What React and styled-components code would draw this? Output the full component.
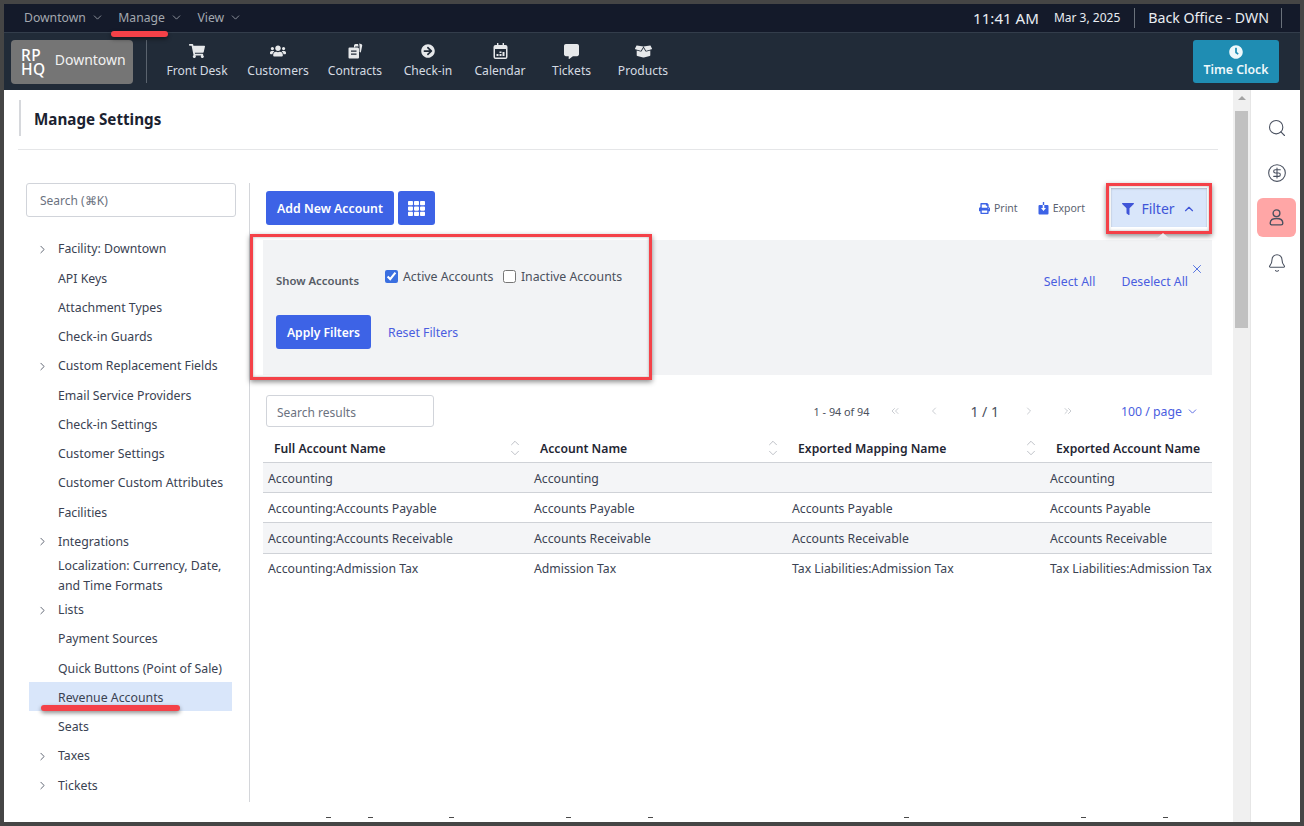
import React from "react";
import styled, { createGlobalStyle } from "styled-components";
import {
  FaShoppingCart,
  FaUsers,
  FaArrowCircleRight,
  FaCommentAlt,
  FaBoxOpen,
  FaClock,
  FaPrint,
  FaFilter,
  FaTh,
} from "react-icons/fa";
import { ChevronDown, ChevronRight, ChevronUp, ChevronLeft, ChevronsLeft, ChevronsRight, X, Search, CircleDollarSign, Bell } from "lucide-react";

const FONT = `"Noto Sans", "Open Sans", sans-serif`;

const GlobalStyle = createGlobalStyle`
  html, body { margin: 0; padding: 0; height: 100%; background: #454545; }
  body { font-family: ${FONT}; overflow: hidden; }
  * { box-sizing: border-box; }
`;

const menuItems = ["Downtown", "Manage", "View"];

const ContractsIcon = () => (
  <svg width="15" height="16" viewBox="0 0 15 16" fill="currentColor">
    <path d="M6 2.5A1.5 1.5 0 0 1 7.5 1H10l.6 2.4H7.2v1.2H6z" />
    <path d="M11.2 0.5 13 .9c.9.2 1.4 1 1.2 1.9L12.8 9.5 11.6 9V3.6z" />
    <path fillRule="evenodd" d="M1.5 4.5h8A1.5 1.5 0 0 1 11 6v8.5a1 1 0 0 1-1 1H1.5a1 1 0 0 1-1-1V5.5a1 1 0 0 1 1-1zM3 7.5v1.2h5.5V7.5zm0 3v1.2h5.5v-1.2z" />
  </svg>
);

const CalendarIcon = () => (
  <svg width="15" height="16" viewBox="0 0 15 16" fill="currentColor">
    <path fillRule="evenodd" d="M4 0h1.4v2h4.2V0H11v2h1.5A2 2 0 0 1 14.500 4v10a2 2 0 0 1-2 2h-10a2 2 0 0 1-2-2V4a2 2 0 0 1 2-2H4zM2 6v8a.6.6 0 0 0 .6.600h9.800A.6.600 0 0 0 13 14V6z" />
    <path d="M3.500 11h2v2h-2zM6.500 11h2v2h-2zM9.500 9h2v4h-2zM6.500 8.500h2v1.500h-2z" />
  </svg>
);

const navItems = [
  { label: "Front Desk", icon: <FaShoppingCart size={16} />, width: 82 },
  { label: "Customers", icon: <FaUsers size={16} />, width: 80 },
  { label: "Contracts", icon: <ContractsIcon />, width: 74 },
  { label: "Check-in", icon: <FaArrowCircleRight size={14} />, width: 72 },
  { label: "Calendar", icon: <CalendarIcon />, width: 72 },
  { label: "Tickets", icon: <FaCommentAlt size={15} />, width: 71 },
  { label: "Products", icon: <FaBoxOpen size={17} />, width: 72 },
];

const sideItems = [
  { label: "Facility: Downtown", more: true },
  { label: "API Keys" },
  { label: "Attachment Types" },
  { label: "Check-in Guards" },
  { label: "Custom Replacement Fields", more: true },
  { label: "Email Service Providers" },
  { label: "Check-in Settings" },
  { label: "Customer Settings" },
  { label: "Customer Custom Attributes" },
  { label: "Facilities" },
  { label: "Integrations", more: true },
  { label: "Localization: Currency, Date, and Time Formats", tall: true },
  { label: "Lists", more: true },
  { label: "Payment Sources" },
  { label: "Quick Buttons (Point of Sale)" },
  { label: "Revenue Accounts", active: true },
  { label: "Seats" },
  { label: "Taxes", more: true },
  { label: "Tickets", more: true },
];

const columns = ["Full Account Name", "Account Name", "Exported Mapping Name", "Exported Account Name"];

const rows = [
  ["Accounting", "Accounting", "", "Accounting"],
  ["Accounting:Accounts Payable", "Accounts Payable", "Accounts Payable", "Accounts Payable"],
  ["Accounting:Accounts Receivable", "Accounts Receivable", "Accounts Receivable", "Accounts Receivable"],
  ["Accounting:Admission Tax", "Admission Tax", "Tax Liabilities:Admission Tax", "Tax Liabilities:Admission Tax"],
];

// clipped descenders of the next screen of text, at the very bottom edge
const clippedGaps = [74, 37, 76, 112, 77, 251, 172, 77];

export default function App() {
  return (
    <Frame>
      <GlobalStyle />
      <TopBar>
        <MenuGroup>
          {menuItems.map((item) => (
            <MenuItem key={item}>
              {item}
              <ChevronDown size={13} strokeWidth={1.5} />
            </MenuItem>
          ))}
        </MenuGroup>
        <StatusGroup>
          <Time>11:41 AM</Time>
          <DateText>Mar 3, 2025</DateText>
          <StatusDivider />
          <Station>Back Office - DWN</Station>
          <StatusDivider />
        </StatusGroup>
      </TopBar>

      <NavBar>
        <LogoButton>
          <LogoMark>
            <span>RP</span>
            <span>HQ</span>
          </LogoMark>
          <LogoName>Downtown</LogoName>
        </LogoButton>
        <NavDivider />
        <NavList>
          {navItems.map((item) => (
            <NavItem key={item.label} $width={item.width}>
              <NavIcon>{item.icon}</NavIcon>
              {item.label}
            </NavItem>
          ))}
        </NavList>
        <TimeClock>
          <FaClock size={14} />
          Time Clock
        </TimeClock>
      </NavBar>

      <Main>
        <Page>
          <PageHeading>Manage Settings</PageHeading>
          <Rule />
          <PageBody>
            <Sidebar>
              <SideSearch placeholder="Search (⌘K)" />
              <SideList>
                {sideItems.map((item) => (
                  <SideRow key={item.label} $active={item.active} $tall={item.tall}>
                    <SideChevron>{item.more && <ChevronRight size={13} strokeWidth={1.6} />}</SideChevron>
                    <span>{item.label}</span>
                  </SideRow>
                ))}
              </SideList>
            </Sidebar>

            <Content>
              <Toolbar>
                <PrimaryButton>Add New Account</PrimaryButton>
                <IconButton>
                  <FaTh size={17} />
                </IconButton>
                <ToolbarRight>
                  <ToolLink>
                    <FaPrint size={11} />
                    Print
                  </ToolLink>
                  <ToolLink>
                    <svg width="11" height="13" viewBox="0 0 11 13" fill="#3d63e6">
                      <path fillRule="evenodd" d="M1.500 3H4.700v3H3l2.500 3L8 6H6.300V3h3.200A1 1 0 0 1 10.500 4v7.500a1 1 0 0 1-1 1h-8a1 1 0 0 1-1-1V4a1 1 0 0 1 1-1z" />
                      <path d="M4.800 0h1.400v3H4.800z" />
                    </svg>
                    Export
                  </ToolLink>
                  <FilterToggle>
                    <FaFilter size={12} />
                    Filter
                    <ChevronUp size={14} strokeWidth={2} />
                  </FilterToggle>
                </ToolbarRight>
              </Toolbar>

              <FilterPanel>
                <PanelForm>
                  <ShowRow>
                    <ShowLabel>Show Accounts</ShowLabel>
                    <CheckLabel>
                      <input type="checkbox" defaultChecked />
                      Active Accounts
                    </CheckLabel>
                    <CheckLabel>
                      <input type="checkbox" />
                      Inactive Accounts
                    </CheckLabel>
                  </ShowRow>
                  <ApplyRow>
                    <ApplyButton>Apply Filters</ApplyButton>
                    <TextLink>Reset Filters</TextLink>
                  </ApplyRow>
                </PanelForm>
                <PanelActions>
                  <TextLink>Select All</TextLink>
                  <TextLink>Deselect All</TextLink>
                  <CloseButton>
                    <X size={14} strokeWidth={1.6} />
                  </CloseButton>
                </PanelActions>
              </FilterPanel>

              <ResultsBar>
                <ResultSearch placeholder="Search results" />
                <Pager>
                  <PageCount>1 - 94 of 94</PageCount>
                  <PagerArrow $gap={27}>
                    <ChevronsLeft size={12} strokeWidth={1.2} />
                  </PagerArrow>
                  <PagerArrow $gap={30}>
                    <ChevronLeft size={12} strokeWidth={1.2} />
                  </PagerArrow>
                  <PageNumber>1 / 1</PageNumber>
                  <PagerArrow $gap={27}>
                    <ChevronRight size={12} strokeWidth={1.2} />
                  </PagerArrow>
                  <PagerArrow $gap={28}>
                    <ChevronsRight size={12} strokeWidth={1.2} />
                  </PagerArrow>
                  <PageSize>
                    100 / page
                    <ChevronDown size={13} strokeWidth={1.6} />
                  </PageSize>
                </Pager>
              </ResultsBar>

              <TableWrap>
                <Table>
                  <colgroup>
                    <col width="266" />
                    <col width="258" />
                    <col width="258" />
                    <col width="167" />
                  </colgroup>
                  <thead>
                    <tr>
                      {columns.map((col, i) => (
                        <HeadCell key={col}>
                          <HeadInner>
                            {col}
                            {i < 3 && (
                              <SortIcons>
                                <ChevronUp size={14} strokeWidth={1} />
                                <ChevronDown size={14} strokeWidth={1} />
                              </SortIcons>
                            )}
                          </HeadInner>
                        </HeadCell>
                      ))}
                    </tr>
                  </thead>
                  <tbody>
                    {rows.map((row, r) => (
                      <BodyRow
                        key={row[0]}
                        $striped={r % 2 === 0}
                        $last={r === rows.length - 1}
                        $height={r === 2 ? 31 : 30}
                      >
                        {row.map((cell, c) => (
                          <BodyCell key={c}>{cell}</BodyCell>
                        ))}
                      </BodyRow>
                    ))}
                  </tbody>
                </Table>
              </TableWrap>
            </Content>
          </PageBody>
          <ClippedLine>
            {clippedGaps.map((gap, i) => (
              <ClippedTick key={i} $gap={gap} />
            ))}
          </ClippedLine>
        </Page>

        <ScrollTrack>
          <ScrollArrow />
          <ScrollThumb />
        </ScrollTrack>

        <Rail>
          <RailButton>
            <Search size={20} strokeWidth={1.3} />
          </RailButton>
          <RailButton>
            <CircleDollarSign size={20} strokeWidth={1.3} />
          </RailButton>
          <RailButton $active>
            <svg width="19" height="19" viewBox="0 0 18 18" fill="none" stroke="currentColor" strokeWidth="1.3">
              <circle cx="9" cy="5" r="3.200" />
              <path d="M3 14.500c0-3 2.500-4.500 6-4.500s6 1.500 6 4.500c0 1-.8 1.500-1.700 1.500H4.700C3.800 16 3 15.500 3 14.500z" />
            </svg>
          </RailButton>
          <RailButton>
            <Bell size={20} strokeWidth={1.3} />
          </RailButton>
        </Rail>
      </Main>

      <ManageUnderline />
      <RevenueUnderline />
      <FilterCallout />
      <PanelCallout />
      <FilterCaret />
    </Frame>
  );
}

const Frame = styled.div`
  position: relative;
  width: 1304px;
  height: 826px;
  padding: 4px;
  background: #454545;
  display: flex;
  flex-direction: column;
  overflow: hidden;
`;

const TopBar = styled.div`
  height: 29px;
  flex: none;
  display: flex;
  align-items: center;
  justify-content: space-between;
  padding: 0 18px 1px 20px;
  background: #141a2a;
  border-bottom: 1px solid #333d4b;
`;

const MenuGroup = styled.div`
  display: flex;
  gap: 14.5px;
`;

const MenuItem = styled.div`
  display: flex;
  align-items: center;
  gap: 5px;
  font-size: 12.2px;
  color: #a3a8af;
`;

const StatusGroup = styled.div`
  display: flex;
  align-items: center;
  color: #e9edf2;
`;

const Time = styled.span`
  font-size: 15.1px;
  margin-right: 15px;
`;

const DateText = styled.span`
  font-size: 12px;
  margin-right: 14px;
`;

const StatusDivider = styled.span`
  width: 1px;
  height: 20px;
  background: #6a717b;
`;

const Station = styled.span`
  font-size: 14.2px;
  margin: 0 12px 0 13px;
`;

const NavBar = styled.div`
  height: 57px;
  flex: none;
  display: flex;
  align-items: center;
  padding: 0 21px 0 7px;
  background: #212b38;
`;

const LogoButton = styled.div`
  width: 122px;
  height: 44px;
  display: flex;
  align-items: center;
  gap: 9px;
  padding-left: 10px;
  border-radius: 4px;
  background: #757575;
  color: #f1f1f1;
`;

const LogoMark = styled.div`
  display: flex;
  flex-direction: column;
  font-size: 15.5px;
  font-weight: 500;
  line-height: 14px;
  letter-spacing: 0.5px;
  color: #fff;
`;

const LogoName = styled.span`
  font-size: 14px;
  line-height: 18px;
  padding-bottom: 4px;
`;

const NavDivider = styled.div`
  width: 1px;
  height: 43px;
  margin: 0 9px 0 13px;
  background: #5a636e;
`;

const NavList = styled.div`
  display: flex;
  flex: 1;
`;

const NavItem = styled.div`
  width: ${(p) => p.$width}px;
  display: flex;
  flex-direction: column;
  align-items: center;
  gap: 2px;
  margin-bottom: 2px;
  font-size: 12.1px;
  line-height: 17px;
  color: #d5dbe2;
`;

const NavIcon = styled.div`
  height: 18px;
  display: flex;
  align-items: center;
  color: #e6e8ea;
`;

const TimeClock = styled.div`
  width: 86px;
  height: 43px;
  display: flex;
  flex-direction: column;
  align-items: center;
  justify-content: center;
  gap: 3px;
  border-radius: 3px;
  background: #1f8db3;
  font-size: 12.3px;
  font-weight: 600;
  line-height: 16px;
  color: #eef8fb;
`;

const Main = styled.div`
  flex: 1;
  min-height: 0;
  display: flex;
  background: #fff;
`;

const Page = styled.div`
  width: 1229px;
  flex: none;
  position: relative;
  padding: 10px 15px 0 14px;
`;

const PageHeading = styled.h1`
  height: 36px;
  margin: 0 0 0 1px;
  padding: 2px 0 0 13px;
  display: flex;
  align-items: center;
  border-left: 2px solid #d6d8dc;
  font-size: 15.2px;
  font-weight: 700;
  color: #1b2230;
`;

const Rule = styled.div`
  height: 1px;
  margin-top: 13px;
  background: #e5e6e8;
`;

const PageBody = styled.div`
  display: flex;
  margin-top: 33px;
`;

const Sidebar = styled.div`
  width: 232px;
  height: 619px;
  flex: none;
  padding-left: 8px;
  border-right: 1px solid #d4d6da;
`;

const SideSearch = styled.input`
  display: block;
  width: 210px;
  height: 34px;
  padding: 0 13px;
  border: 1px solid #d1d4da;
  border-radius: 3px;
  outline: none;
  font-family: ${FONT};
  font-size: 12px;
  &::placeholder {
    color: #6b7280;
    opacity: 1;
  }
`;

const SideList = styled.div`
  margin: 16.2px 0 0 3px;
  width: 203px;
`;

const SideRow = styled.div`
  display: flex;
  align-items: center;
  min-height: 29.25px;
  padding-top: ${(p) => (p.$tall ? "1.5px" : "3px")};
  margin-bottom: ${(p) => (p.$tall ? "-2.5px" : "0")};
  background: ${(p) => (p.$active ? "#d9e6fa" : "transparent")};
  font-size: 12.3px;
  line-height: 20px;
  color: #3a4252;
`;

const SideChevron = styled.span`
  width: 29px;
  flex: none;
  display: flex;
  justify-content: center;
  padding-right: 2px;
  color: #4a5160;
`;

const Content = styled.div`
  flex: 1;
  min-width: 0;
  padding-left: 13px;
  margin-right: 6px;
`;

const Toolbar = styled.div`
  height: 49px;
  margin-top: 8px;
  padding-left: 3px;
  display: flex;
  gap: 4px;
  align-items: flex-start;
`;

const PrimaryButton = styled.button`
  width: 128px;
  height: 34px;
  padding: 0;
  border: 0;
  border-radius: 3px;
  background: #3d63e6;
  font-family: ${FONT};
  font-size: 12.3px;
  font-weight: 600;
  color: #fff;
`;

const IconButton = styled(PrimaryButton)`
  width: 37px;
  display: flex;
  align-items: center;
  justify-content: center;
`;

const ToolbarRight = styled.div`
  margin-left: auto;
  display: flex;
  align-items: flex-start;
  color: #5b6270;
`;

const ToolLink = styled.div`
  display: flex;
  align-items: center;
  gap: 4px;
  height: 34px;
  margin-right: 21px;
  font-size: 10.5px;
  color: #5b6270;
  svg {
    color: #3d63e6;
  }
  &:first-child {
    margin-right: 20px;
  }
`;

const FilterToggle = styled.div`
  width: 96px;
  height: 39px;
  margin: -3px 5px 0 5px;
  padding-top: 2px;
  display: flex;
  align-items: center;
  justify-content: center;
  gap: 7px;
  background: #d9e6fa;
  box-shadow: inset 0 1px 2px rgba(0, 0, 0, 0.2);
  font-size: 14px;
  color: #3f55d8;
`;

const FilterPanel = styled.div`
  height: 135px;
  display: flex;
  justify-content: space-between;
  padding: 0 8px 0 13px;
  background: #f2f3f5;
`;

const PanelForm = styled.div`
  display: flex;
  flex-direction: column;
`;

const ShowRow = styled.div`
  display: flex;
  padding-top: 28px;
`;

const ShowLabel = styled.span`
  width: 109px;
  padding-top: 5px;
  font-size: 11.3px;
  font-weight: 600;
  color: #565c66;
`;

const CheckLabel = styled.label`
  display: flex;
  align-items: center;
  height: 16px;
  margin-right: 9.500px;
  font-size: 12.3px;
  color: #4a505c;
  input {
    width: 13px;
    height: 13px;
    margin: 0 5px 0 0;
    accent-color: #3b6fe0;
  }
`;

const ApplyRow = styled.div`
  display: flex;
  align-items: center;
  gap: 17px;
  margin-top: 27px;
`;

const ApplyButton = styled(PrimaryButton)`
  width: 95px;
  font-size: 12.1px;
`;

const TextLink = styled.span`
  font-size: 12.3px;
  color: #4a5de0;
`;

const PanelActions = styled.div`
  display: flex;
  align-items: flex-start;
  gap: 26px;
  padding-top: 33px;
  ${TextLink} {
    line-height: 17px;
  }
`;

const CloseButton = styled.span`
  display: flex;
  margin: -11px 0 0 -24px;
  color: #4a6be0;
`;

const ResultsBar = styled.div`
  display: flex;
  align-items: center;
  justify-content: space-between;
  margin-top: 20px;
  padding-left: 3px;
`;

const ResultSearch = styled.input`
  width: 168px;
  height: 32px;
  padding: 2px 10px 0;
  border: 1px solid #d1d4da;
  border-radius: 3px;
  outline: none;
  font-family: ${FONT};
  font-size: 12px;
  &::placeholder {
    color: #6b7280;
    opacity: 1;
  }
`;

const Pager = styled.div`
  display: flex;
  align-items: center;
  padding-right: 13px;
`;

const PageCount = styled.span`
  font-size: 10.8px;
  color: #4a505c;
  margin-right: 20px;
`;

const PagerArrow = styled.span`
  display: flex;
  margin-right: ${(p) => p.$gap}px;
  color: #a5a9b1;
`;

const PageNumber = styled.span`
  font-size: 14px;
  color: #4a505c;
  margin-right: 24px;
`;

const PageSize = styled.span`
  display: flex;
  align-items: center;
  gap: 4px;
  margin-left: 19px;
  font-size: 12.3px;
  color: #4a5de0;
`;

const TableWrap = styled.div`
  margin-top: 6px;
  overflow: hidden;
`;

const Table = styled.table`
  width: 949px;
  table-layout: fixed;
  border-collapse: collapse;
`;

const HeadCell = styled.th`
  height: 29px;
  padding: 3px 7px 0 11px;
  border-bottom: 1px solid #cfd2d7;
  text-align: left;
  font-size: 12.2px;
  font-weight: 600;
  color: #1f2633;
`;

const HeadInner = styled.div`
  display: flex;
  align-items: center;
  justify-content: space-between;
  white-space: nowrap;
`;

const SortIcons = styled.span`
  display: flex;
  flex-direction: column;
  margin-top: -2px;
  color: #9096a1;
  svg {
    display: block;
    margin: -2px 0;
  }
`;

const BodyCell = styled.td`
  padding: 2px 0 0 5px;
  font-size: 12.25px;
  white-space: nowrap;
  overflow: hidden;
  color: #3a4252;
`;

const BodyRow = styled.tr`
  height: ${(p) => p.$height}px;
  background: ${(p) => (p.$striped ? "#f4f5f7" : "#fff")};
  border-bottom: ${(p) => (p.$last ? "0" : "1px solid #cfd2d7")};
  ${BodyCell} {
    padding-top: ${(p) => (p.$last ? "0" : "2px")};
  }
`;

const ClippedLine = styled.div`
  position: absolute;
  left: 248px;
  bottom: 4px;
  display: flex;
`;

const ClippedTick = styled.span`
  width: 5px;
  height: 1px;
  margin-left: ${(p) => p.$gap}px;
  background: #4a4a4a;
`;

const ScrollTrack = styled.div`
  width: 17px;
  flex: none;
  padding: 6px 2px 0;
  background: #f0f0f0;
`;

const ScrollArrow = styled.div`
  width: 0;
  height: 0;
  margin: 0 auto 11px;
  border-left: 4px solid transparent;
  border-right: 4px solid transparent;
  border-bottom: 4px solid #a3a3a3;
`;

const ScrollThumb = styled.div`
  height: 217px;
  background: #c1c1c1;
`;

const Rail = styled.div`
  flex: 1;
  display: flex;
  flex-direction: column;
  align-items: center;
  gap: 6px;
  padding: 18px 0 0 2px;
  border-left: 1px solid #e6e6e6;
`;

const RailButton = styled.div`
  width: 39px;
  height: 39px;
  display: flex;
  align-items: center;
  justify-content: center;
  border-radius: 6px;
  background: ${(p) => (p.$active ? "#ffa6a6" : "transparent")};
  color: #4a5160;
`;

// red markup drawn on top of the screenshot
const Underline = styled.div`
  position: absolute;
  height: 6px;
  border-radius: 3px;
  background: #f44148;
  box-shadow: 0 2px 4px rgba(0, 0, 0, 0.45);
`;

const ManageUnderline = styled(Underline)`
  left: 111px;
  top: 31px;
  width: 57px;
`;

const RevenueUnderline = styled(Underline)`
  left: 41px;
  top: 705px;
  width: 139px;
`;

const Callout = styled.div`
  position: absolute;
  border: 3px solid #f44148;
  box-shadow: 0 2px 5px rgba(0, 0, 0, 0.45), inset 0 0 3px rgba(0, 0, 0, 0.3);
`;

const FilterCallout = styled(Callout)`
  left: 1106px;
  top: 183px;
  width: 106px;
  height: 51px;
`;

const PanelCallout = styled(Callout)`
  left: 250px;
  top: 234px;
  width: 402px;
  height: 146px;
`;

const FilterCaret = styled.div`
  position: absolute;
  left: 1155px;
  top: 233px;
  width: 0;
  height: 0;
  border-left: 8px solid transparent;
  border-right: 8px solid transparent;
  border-bottom: 7px solid #ececee;
`;
